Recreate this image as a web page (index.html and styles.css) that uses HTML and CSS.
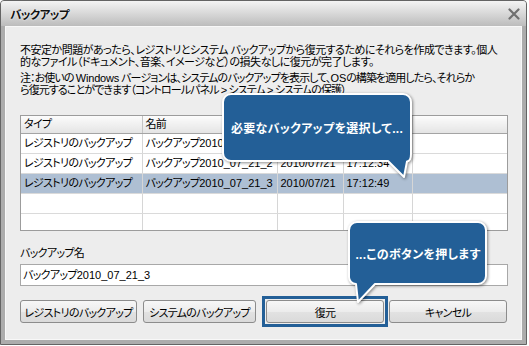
FILE: index.html
```html
<!DOCTYPE html>
<html lang="ja">
<head>
<meta charset="utf-8">
<title>バックアップ</title>
<link rel="stylesheet" href="styles.css">
</head>
<body>
<div class="window">
  <div class="titlebar">
    <span class="title">バックアップ</span>
    <svg class="close" width="12" height="12" viewBox="0 0 12 12"><path d="M1.5 1.5L10.5 10.5M10.5 1.5L1.5 10.5" stroke="#707070" stroke-width="2.2" stroke-linecap="round"/></svg>
  </div>
  <div class="client">
    <p class="desc">不安定か問題があったら、レジストリとシステム バックアップから復元するためにそれらを作成できます。個人<br>的なファイル（ドキュメント、音楽、イメージなど）の損失なしに復元が完了します。</p>
    <p class="desc note">注：お使いの <span class="lat">Windows</span> バージョンは、システムのバックアップを表示して、<span class="lat">OS</span>の構築を適用したら、それらか<br>ら復元することができます（コントロールパネル &gt; システム &gt; システムの保護）</p>
    <div class="grid-wrap">
      <table class="grid">
        <colgroup>
          <col class="c1"><col class="c2"><col class="c3"><col class="c4"><col class="c5">
        </colgroup>
        <tr><th>タイプ</th><th>名前</th><th></th><th></th><th class="last"></th></tr>
        <tr><td>レジストリのバックアップ</td><td>バックアップ<span class="lat">2010_07_21_1</span></td><td class="lat">2010/07/21</td><td class="lat">17:12:19</td><td class="last"></td></tr>
        <tr><td>レジストリのバックアップ</td><td>バックアップ<span class="lat">2010_07_21_2</span></td><td class="lat">2010/07/21</td><td class="lat">17:12:34</td><td class="last"></td></tr>
        <tr class="sel"><td>レジストリのバックアップ</td><td>バックアップ<span class="lat">2010_07_21_3</span></td><td class="lat">2010/07/21</td><td class="lat">17:12:49</td><td class="last"></td></tr>
        <tr><td></td><td></td><td></td><td></td><td class="last"></td></tr>
        <tr><td></td><td></td><td></td><td></td><td class="last"></td></tr>
      </table>
    </div>
    <div class="label">バックアップ名</div>
    <div class="input">バックアップ<span class="lat">2010_07_21_3</span></div>
    <div class="buttons">
      <button class="btn b1">レジストリのバックアップ</button>
      <button class="btn b2">システムのバックアップ</button>
      <div class="focus"><button class="btn b3">復元</button></div>
      <button class="btn b4">キャンセル</button>
    </div>
  </div>
  <div class="tip tip1">
    <svg width="190" height="86" viewBox="0 0 190 86"><path d="M9 1H181A8 8 0 0 1 189 9V61Q189 68 185 68.5L182 84L166 68H9A8 8 0 0 1 1 60V9A8 8 0 0 1 9 1Z" fill="#235f97" stroke="#fff" stroke-width="2" stroke-linejoin="round"/></svg>
    <span>必要なバックアップを選択して...</span>
  </div>
  <div class="tip tip2">
    <svg width="140" height="83" viewBox="0 0 140 83"><path d="M9 1H130A8 8 0 0 1 138 9V55A8 8 0 0 1 130 63H27L10 81L8 63A7 7 0 0 1 1 56V9A8 8 0 0 1 9 1Z" fill="#235f97" stroke="#fff" stroke-width="2" stroke-linejoin="round"/></svg>
    <span>...このボタンを押します</span>
  </div>
</div>
</body>
</html>
```
FILE: styles.css
```css
body {
  margin: 0;
  background: #fff;
  font-family: "Liberation Sans", "Noto Sans CJK JP", sans-serif;
  font-size: 11px;
  letter-spacing: -0.7px;
  color: #000;
  font-feature-settings: "palt";
}

.lat {
  letter-spacing: 0;
}

.window {
  position: relative;
  width: 527px;
  height: 345px;
  box-sizing: border-box;
  border: 1px solid #646464;
  border-radius: 4px 4px 0 0;
  background: #acacac;
  padding: 0 4px 4px;
  display: flex;
  flex-direction: column;
}

.titlebar {
  margin: 0 -4px;
  height: 25px;
  flex: none;
  background: linear-gradient(#f4f4f4, #bcbcbc);
  border-radius: 3px 3px 0 0;
  display: flex;
  align-items: center;
  justify-content: space-between;
  padding: 0 6px 0 9px;
}

.title {
  font-weight: bold;
  font-size: 11.5px;
  letter-spacing: -0.6px;
  color: #111;
  text-shadow: 0 0 2px #fff;
}

.client {
  flex: 1;
  background: #ededed;
  border: 1px solid #f8f8f8;
  padding: 17px 13px 0 14px;
}

.desc {
  margin: 0;
  line-height: 12px;
  white-space: nowrap;
  letter-spacing: -0.5px;
}

.desc .lat {
  letter-spacing: -0.2px;
}

.note {
  margin-top: 4px;
  letter-spacing: -0.9px;
}

.grid-wrap {
  margin-top: 19px;
  width: 486px;
  height: 114px;
  border: 1px solid #9c9c9c;
  overflow: hidden;
  background: #fff;
}

.grid {
  border-collapse: collapse;
  table-layout: fixed;
  width: 486px;
}

.c1 { width: 121px; }
.c2 { width: 135px; }
.c3 { width: 66px; }
.c4 { width: 69px; }

.grid th,
.grid td {
  padding: 0 0 0 3px;
  text-align: left;
  font-weight: normal;
  white-space: nowrap;
  overflow: hidden;
  border-right: 1px solid #d6d6d6;
}

.grid th {
  height: 17px;
  line-height: 17px;
  background: linear-gradient(#fcfcfc, #e4e4e4);
  border-bottom: 1px solid #a4a4a4;
  border-right-color: #c4c4c4;
}

.grid td {
  height: 19px;
  line-height: 19px;
  border-bottom: 1px solid #dadada;
}

.grid .last {
  border-right: none;
}

.grid .sel td {
  background: #aebfd3;
}

.label {
  margin-top: 16px;
  line-height: 12px;
}

.input {
  margin-top: 5px;
  width: 484px;
  height: 20px;
  border: 1px solid #a8a8a8;
  background: #fff;
  padding-left: 2px;
  line-height: 20px;
}

.buttons {
  margin-top: 10px;
  display: flex;
  align-items: center;
}

.btn {
  height: 23px;
  box-sizing: border-box;
  border: 1px solid #8c8c8c;
  border-radius: 3px;
  background: linear-gradient(#f7f7f7, #ececec 50%, #e2e2e2 51%, #dadada);
  font: inherit;
  letter-spacing: inherit;
  font-feature-settings: "palt";
  white-space: nowrap;
  color: #000;
  padding: 0;
}

.b1 { width: 117px; }
.b2 { width: 113px; margin-left: 6px; }
.b3 { width: 118px; display: block; }
.b4 { width: 118px; margin-left: 1px; }

.focus {
  margin-left: 6px;
  border: 3px solid #235f97;
  padding: 1px;
}

.tip {
  position: absolute;
  display: flex;
  align-items: center;
  justify-content: center;
  box-sizing: border-box;
  color: #fff;
  font-weight: bold;
  font-size: 12px;
  letter-spacing: 0.3px;
}

.tip svg {
  position: absolute;
  left: 0;
  top: 0;
  filter: drop-shadow(1px 1px 1.5px rgba(0, 0, 0, 0.45));
}

.tip span {
  position: relative;
  white-space: nowrap;
}

.tip1 {
  left: 221px;
  top: 92px;
  width: 190px;
  height: 86px;
  padding-bottom: 17px;
}

.tip2 {
  left: 347px;
  top: 220px;
  width: 140px;
  height: 83px;
  padding-bottom: 18px;
}
```
